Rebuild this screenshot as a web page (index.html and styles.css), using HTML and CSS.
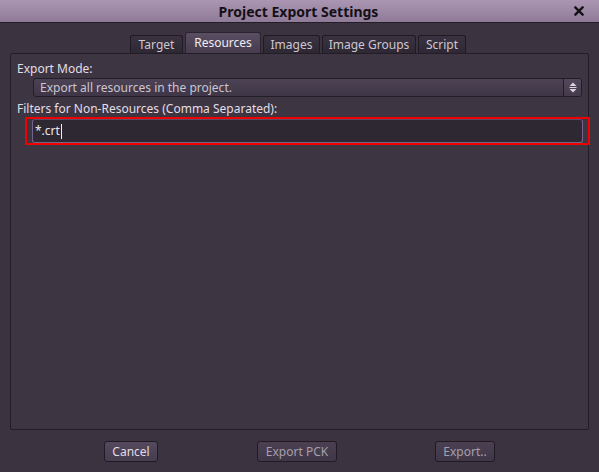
FILE: index.html
```html
<!DOCTYPE html>
<html>
<head>
<meta charset="utf-8">
<link rel="stylesheet" href="styles.css">
</head>
<body>
<div class="window">
  <div class="titlebar">
    <span class="title">Project Export Settings</span>
    <span class="close">
      <svg width="10" height="10" viewBox="0 0 10 10"><path d="M1.5 1.5 L8.5 8.5 M8.5 1.5 L1.5 8.5" stroke="#111" stroke-width="2.4" stroke-linecap="square"/></svg>
    </span>
  </div>
  <div class="content">
    <div class="tabs">
      <div class="tab t-target">Target</div>
      <div class="tab active t-res">Resources</div>
      <div class="tab t-img">Images</div>
      <div class="tab t-grp">Image Groups</div>
      <div class="tab t-script">Script</div>
    </div>
    <div class="panel">
      <div class="label">Export Mode:</div>
      <div class="select">
        <div class="select-text">Export all resources in the project.</div>
        <div class="select-arrow">
          <svg width="8" height="11" viewBox="0 0 8 11"><path d="M4 0.5 L7.5 4 H0.5 Z" fill="#d8d2dd"/><rect x="0.5" y="5" width="7" height="1" fill="#d8d2dd"/><path d="M4 10.5 L7.5 7 H0.5 Z" fill="#d8d2dd"/></svg>
        </div>
      </div>
      <div class="label label2">Filters for Non-Resources (Comma Separated):</div>
      <div class="highlight">
        <div class="input">*.crt<span class="caret"></span></div>
      </div>
    </div>
    <div class="footer">
      <div class="btn b-cancel">Cancel</div>
      <div class="btn disabled b-pck">Export PCK</div>
      <div class="btn disabled b-exp">Export..</div>
    </div>
  </div>
</div>
</body>
</html>
```
FILE: styles.css
```css
html, body {
  margin: 0;
  padding: 0;
  background: #3a333f;
}
.window {
  width: 599px;
  height: 472px;
  background: #3b3440;
  font-family: "Noto Sans", "DejaVu Sans", sans-serif;
  font-size: 12px;
  color: #e2dde6;
  display: flex;
  flex-direction: column;
  overflow: hidden;
}
.titlebar {
  height: 23px;
  flex: none;
  box-sizing: border-box;
  background: linear-gradient(#aa96b2, #8f7b98);
  border-bottom: 1px solid #221d26;
  display: flex;
  align-items: center;
  justify-content: center;
  position: relative;
}
.title {
  font-weight: bold;
  font-size: 14px;
  color: #141016;
  padding-right: 2px;
}
.close {
  position: absolute;
  right: 15px;
  top: 6px;
  width: 10px;
  height: 10px;
  display: flex;
}
.content {
  flex: 1;
  display: flex;
  flex-direction: column;
  padding: 9px 10px 0 10px;
}
.tabs {
  display: flex;
  align-items: flex-end;
  gap: 2px;
  height: 21px;
  padding-left: 120px;
}
.tab {
  height: 18px;
  box-sizing: border-box;
  text-align: center;
  background: linear-gradient(#3a3240, #2e2834);
  border: 1px solid #1f1a23;
  border-bottom: none;
  border-radius: 3px 3px 0 0;
  color: #cdc7d2;
  line-height: 17px;
}
.tab.active {
  height: 21px;
  background: linear-gradient(#5a4e62, #463c4e);
  color: #f0ecf2;
  border-color: #2a242e;
  line-height: 19px;
}
.t-target { width: 53px; }
.t-res { width: 76px; }
.t-img { width: 57px; }
.t-grp { width: 94px; }
.t-script { width: 48px; }
.panel {
  height: 377px;
  box-sizing: border-box;
  border: 1px solid #221d26;
  border-radius: 2px;
  background: #3d3642;
  padding: 6px 6px 0 6px;
  width: 579px;
}
.label {
  height: 17px;
  line-height: 17px;
}
.label2 {
  margin-top: 4px;
  height: 16px;
  line-height: 16px;
}
.select {
  margin: 1px 0 0 16px;
  width: 549px;
  height: 19px;
  box-sizing: border-box;
  display: flex;
  border: 1px solid #221d26;
  border-radius: 3px;
  background: linear-gradient(#4c4255, #3e3646);
  overflow: hidden;
}
.select-text {
  flex: 1;
  padding-left: 6px;
  line-height: 17px;
  color: #ccc5d2;
}
.select-arrow {
  width: 17px;
  border-left: 1px solid #221d26;
  display: flex;
  align-items: center;
  justify-content: center;
  background: linear-gradient(#52475b, #433a4b);
}
.highlight {
  margin-left: 8px;
  width: 565px;
  height: 28px;
  box-sizing: border-box;
  border: 2px solid #f00000;
  padding: 0 5px 0 5px;
}
.input {
  height: 24px;
  box-sizing: border-box;
  border: 1px solid #76628a;
  border-top-color: #5a4c68;
  border-radius: 3px;
  background: #2e2833;
  padding-left: 2px;
  line-height: 20px;
  color: #ece8ef;
  display: flex;
  align-items: center;
}
.caret {
  display: inline-block;
  width: 1px;
  height: 15px;
  background: #f0ecf2;
  margin-left: 1px;
}
.footer {
  height: 43px;
  display: flex;
  align-items: center;
  padding-left: 94px;
}
.btn {
  height: 21px;
  box-sizing: border-box;
  text-align: center;
  border: 1px solid #1f1a23;
  border-radius: 3px;
  background: linear-gradient(#54495d, #463d4f);
  line-height: 19px;
  color: #e2dde6;
}
.b-cancel { width: 54px; }
.b-pck { width: 80px; margin-left: 99px; }
.b-exp { width: 60px; margin-left: 98px; }
.btn.disabled {
  color: #a69fab;
  background: linear-gradient(#4a4052, #3f3747);
}
```
